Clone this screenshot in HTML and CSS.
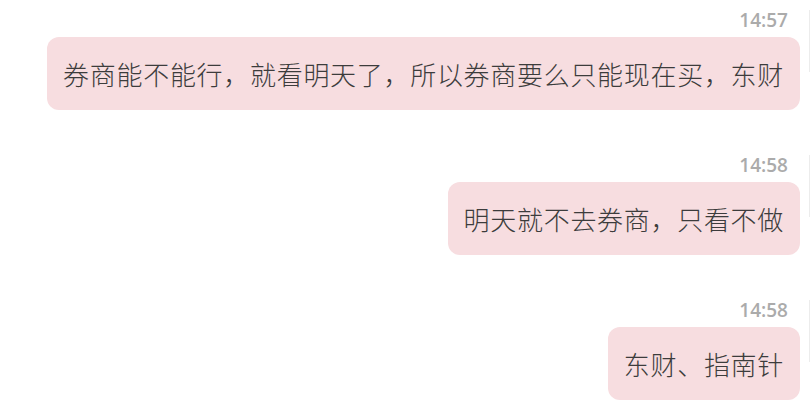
FILE: index.html
```html
<!DOCTYPE html>
<html lang="zh-CN">

<head>
    <meta charset="UTF-8">
    <meta name="viewport" content="width=device-width, initial-scale=1.0">
    <title>Chat</title>
    <link rel="stylesheet" href="styles.css">
</head>

<body>
    <div class="chat">
        <div class="msg">
            <div class="msg-body">
                <div class="time">14:57</div>
                <div class="bubble">券商能不能行，就看明天了，所以券商要么只能现在买，东财</div>
            </div>
            <div class="avatar"></div>
        </div>
        <div class="msg">
            <div class="msg-body">
                <div class="time">14:58</div>
                <div class="bubble">明天就不去券商，只看不做</div>
            </div>
            <div class="avatar"></div>
        </div>
        <div class="msg">
            <div class="msg-body">
                <div class="time">14:58</div>
                <div class="bubble">东财、指南针</div>
            </div>
            <div class="avatar"></div>
        </div>
    </div>
</body>

</html>
```

FILE: styles.css
```css
body {
    margin: 0;
    background: #fff;
    overflow: hidden;
    font-family: "Noto Sans CJK SC", "Noto Sans", sans-serif;
}

.chat {
    display: flex;
    flex-direction: column;
    gap: 45px;
    padding-top: 10px;
}

.msg {
    display: flex;
    justify-content: flex-end;
    align-items: flex-start;
    gap: 9px;
}

.msg-body {
    display: flex;
    flex-direction: column;
    align-items: flex-end;
}

.time {
    font-family: "Open Sans", sans-serif;
    font-weight: 600;
    font-size: 19px;
    line-height: 20px;
    color: #ababab;
    padding-right: 12px;
    margin-bottom: 7px;
}

.bubble {
    background: #f7dde0;
    color: #3c3c3c;
    border-radius: 12px;
    height: 73px;
    padding: 0 16px 0 16px;
    display: flex;
    align-items: center;
    font-size: 26px;
    font-weight: 300;
    letter-spacing: 0.7px;
    white-space: nowrap;
}

.avatar {
    width: 2px;
    height: 62px;
    border-left: 1px solid #ececec;
    flex-shrink: 0;
}
```
